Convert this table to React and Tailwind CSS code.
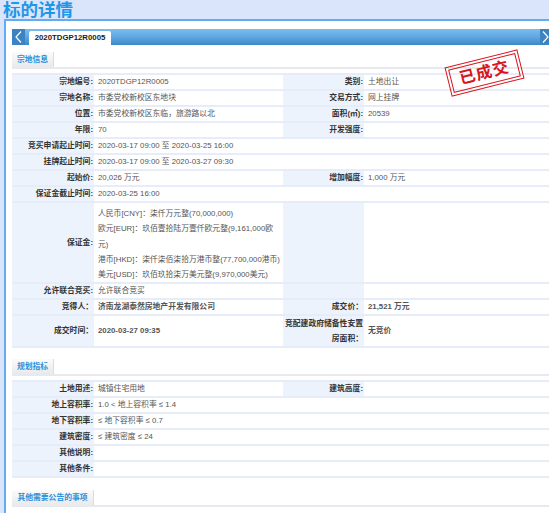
import React from 'react';

// Land-transaction detail page: a lavender header, a blue tab strip and
// three sections of label/value rows.
const FONT = { fontFamily: '"Liberation Sans", "Noto Sans CJK SC", sans-serif' };

const ROW = 'flex h-[16px] border-b-2 border-[#e6edf8]';
const LABEL =
  'w-[82px] shrink-0 flex items-center justify-end pr-[1px] bg-[#edf3fd] font-semibold text-[#333]';
const VALUE = 'w-[189px] shrink-0 flex items-center pl-[4px] text-[#555]';
const LABEL2 =
  'w-[81px] shrink-0 flex items-center justify-end pr-[1px] bg-[#edf3fd] font-semibold text-[#333]';
const VALUE2 = 'flex-1 flex items-center pl-[4px] text-[#555]';
const WIDE = 'flex-1 flex items-center pl-[4px] text-[#555]';
const STRONG = 'font-bold text-[#1c97e6]';

function SectionHead({ title, w }) {
  return (
    <div className="border-b-2 border-[#e7e9ee]">
      <div
        className={`${w} h-[15px] flex items-center justify-center bg-gradient-to-b from-[#fbfbfb] to-[#e9eaec] border-r border-[#dadcdf] text-[#2b91dc] text-[7.8px] font-semibold`}
      >
        {title}
      </div>
    </div>
  );
}

function Chevron({ dir }) {
  return (
    <svg width="7" height="12" viewBox="0 0 7 12" fill="none">
      <path
        d={dir === 'left' ? 'M6 0.5 L1 6 L6 11.5' : 'M1 0.5 L6 6 L1 11.5'}
        stroke="white"
        strokeWidth="1.2"
      />
    </svg>
  );
}

export default function App() {
  return (
    <div
      className="relative w-[549px] h-[513px] overflow-hidden bg-[#dae4fb] text-[7.8px] leading-[14px]"
      style={FONT}
    >
      <div className="h-[19px] pl-[3px] overflow-hidden text-[17.5px] leading-[21px] font-bold text-[#1d97e7]">
        标的详情
      </div>

      <div className="ml-[4px] w-[560px] h-[494px] bg-white border-l-2 border-t-2 border-[#62acef] pl-[6px] pt-[8px]">
        <div className="w-[540px]">
          {/* tab strip */}
          <div className="flex h-[16px] bg-gradient-to-b from-[#7dbdee] via-[#5fa7e1] to-[#3c89c5]">
            <div className="w-[13px] flex items-center justify-center bg-[#3b84c1]">
              <Chevron dir="left" />
            </div>
            <div className="ml-[4px] mt-[2px] w-[82px] h-[14px] rounded-t-[2px] bg-white flex items-center justify-center font-bold text-[#1a1a1a]">
              2020TDGP12R0005
            </div>
            <div className="flex-1" />
            <div className="w-[12px] flex items-center justify-start pl-[2px] bg-[#3b84c1]">
              <Chevron dir="right" />
            </div>
          </div>

          <div className="mt-[7px]">
            <SectionHead title="宗地信息" w="w-[42px]" />
          </div>

          <div className="mt-[4px] border-t-2 border-[#e6edf8]">
            <div className={ROW}>
              <div className={LABEL}>宗地编号:</div>
              <div className={VALUE}>2020TDGP12R0005</div>
              <div className={LABEL2}>类别:</div>
              <div className={VALUE2}>土地出让</div>
            </div>
            <div className={ROW}>
              <div className={LABEL}>宗地名称:</div>
              <div className={VALUE}>市委党校新校区东地块</div>
              <div className={LABEL2}>交易方式:</div>
              <div className={VALUE2}>网上挂牌</div>
            </div>
            <div className={ROW}>
              <div className={LABEL}>位置:</div>
              <div className={VALUE}>市委党校新校区东临，旅游路以北</div>
              <div className={LABEL2}>面积(㎡):</div>
              <div className={VALUE2}>20539</div>
            </div>
            <div className={ROW}>
              <div className={LABEL}>年限:</div>
              <div className={VALUE}>70</div>
              <div className={LABEL2}>开发强度:</div>
              <div className={VALUE2} />
            </div>
            <div className={ROW}>
              <div className={LABEL}>竞买申请起止时间:</div>
              <div className={WIDE}>2020-03-17 09:00 至 2020-03-25 16:00</div>
            </div>
            <div className={ROW}>
              <div className={LABEL}>挂牌起止时间:</div>
              <div className={WIDE}>2020-03-17 09:00 至 2020-03-27 09:30</div>
            </div>
            <div className={ROW}>
              <div className={LABEL}>起始价:</div>
              <div className={VALUE}>20,026 万元</div>
              <div className={LABEL2}>增加幅度:</div>
              <div className={VALUE2}>1,000 万元</div>
            </div>
            <div className={ROW}>
              <div className={LABEL}>保证金截止时间:</div>
              <div className={WIDE}>2020-03-25 16:00</div>
            </div>
            <div className="flex h-[81px] border-b-2 border-[#e6edf8]">
              <div className={LABEL}>保证金:</div>
              <div className="w-[189px] shrink-0 pl-[4px] pt-[3px] leading-[15.3px] text-[#555] whitespace-nowrap">
                <div>人民币[CNY]：柒仟万元整(70,000,000)</div>
                <div>
                  欧元[EUR]：玖佰壹拾陆万壹仟欧元整(9,161,000欧
                  <br />
                  元)
                </div>
                <div>港币[HKD]：柒仟柒佰柒拾万港币整(77,700,000港币)</div>
                <div>美元[USD]：玖佰玖拾柒万美元整(9,970,000美元)</div>
              </div>
              <div className={LABEL2} />
              <div className={VALUE2} />
            </div>
            <div className={ROW}>
              <div className={LABEL}>允许联合竞买:</div>
              <div className={VALUE}>允许联合竞买</div>
              <div className={LABEL2} />
              <div className={VALUE2} />
            </div>
            <div className={ROW}>
              <div className={LABEL}>竞得人：</div>
              <div className={`${VALUE} ${STRONG}`}>济南龙湖泰然房地产开发有限公司</div>
              <div className={LABEL2}>成交价：</div>
              <div className={`${VALUE2} ${STRONG}`}>21,521 万元</div>
            </div>
            <div className="flex h-[32px] border-b-2 border-[#e6edf8]">
              <div className={LABEL}>成交时间：</div>
              <div className={`${VALUE} ${STRONG}`}>2020-03-27 09:35</div>
              <div className="w-[81px] shrink-0 flex flex-col justify-center items-end pr-[1px] bg-[#edf3fd] font-semibold text-[#333] leading-[15px] text-right">
                <span>竞配建政府储备性安置</span>
                <span>房面积：</span>
              </div>
              <div className={`${VALUE2} ${STRONG}`}>无竞价</div>
            </div>
          </div>

          <div className="mt-[11px]">
            <SectionHead title="规划指标" w="w-[42px]" />
          </div>

          <div className="mt-[4px] border-t-2 border-[#e6edf8]">
            <div className={ROW}>
              <div className={LABEL}>土地用途:</div>
              <div className={VALUE}>城镇住宅用地</div>
              <div className={LABEL2}>建筑高度:</div>
              <div className={VALUE2} />
            </div>
            <div className={ROW}>
              <div className={LABEL}>地上容积率:</div>
              <div className={WIDE}>1.0 &lt; 地上容积率 ≤ 1.4</div>
            </div>
            <div className={ROW}>
              <div className={LABEL}>地下容积率:</div>
              <div className={WIDE}>≤ 地下容积率 ≤ 0.7</div>
            </div>
            <div className={ROW}>
              <div className={LABEL}>建筑密度:</div>
              <div className={WIDE}>≤ 建筑密度 ≤ 24</div>
            </div>
            <div className={ROW}>
              <div className={LABEL}>其他说明:</div>
              <div className={WIDE} />
            </div>
            <div className={ROW}>
              <div className={LABEL}>其他条件:</div>
              <div className={WIDE} />
            </div>
          </div>

          <div className="mt-[12px]">
            <SectionHead title="其他需要公告的事项" w="w-[82px]" />
          </div>
        </div>
      </div>

      {/* "已成交" stamp over the table */}
      <div className="absolute left-[447px] top-[58px] w-[75px] h-[30px] -rotate-[14deg] border-[1.5px] border-[#d8151e] p-[2px]">
        <div className="h-full border border-[#d8151e] flex items-center justify-center text-[16px] leading-none font-bold text-[#d8151e] tracking-[1px]">
          已成交
        </div>
      </div>
    </div>
  );
}
